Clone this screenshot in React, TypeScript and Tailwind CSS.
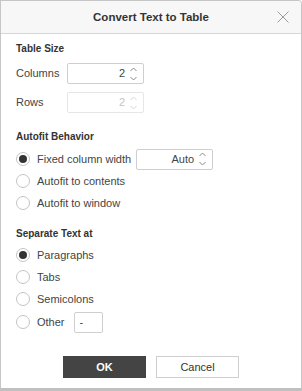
import React, { useState } from 'react'

const font = { fontFamily: '"Liberation Sans", Arial, sans-serif' }

const Arrows = ({ disabled = false }: { disabled?: boolean }) => (
  <svg width="9" height="16" viewBox="0 0 9 16" className="shrink-0">
    <path
      d="M1.5 5 L4.5 2 L7.5 5 M1.5 11 L4.5 14 L7.5 11"
      fill="none"
      stroke={disabled ? '#d6d6d6' : '#8a8a8a'}
      strokeWidth="1"
    />
  </svg>
)

const Spinner = ({ value, disabled = false }: { value: string; disabled?: boolean }) => (
  <div
    className={`flex items-center h-[21px] w-[77px] border rounded-[2px] pl-2 pr-[5px] gap-[4px] ${
      disabled ? 'border-[#e6e6e6] text-[#c4c4c4]' : 'border-[#cfcfcf] text-[#444]'
    }`}
  >
    <span className="flex-1 text-right text-[11px]">{value}</span>
    <Arrows disabled={disabled} />
  </div>
)

const Radio = ({ checked, label, onClick }: { checked: boolean; label: string; onClick: () => void }) => (
  <button onClick={onClick} className="flex items-center gap-[7px] text-[11px] text-[#444] h-[22px]">
    <span className="w-[14px] h-[14px] rounded-full border border-[#c4c4c4] flex items-center justify-center bg-white">
      {checked && <span className="w-[8px] h-[8px] rounded-full bg-[#333]" />}
    </span>
    {label}
  </button>
)

export default function App() {
  const [fit, setFit] = useState(0)
  const [sep, setSep] = useState(0)

  return (
    <div style={font} className="w-[302px] h-[391px] bg-white border border-[#c6c6c6] border-b-[3px] border-b-[#c0c0c0] rounded-tr-[4px] flex flex-col overflow-hidden">
      <div className="h-[33px] shrink-0 bg-[#f7f7f7] border-b border-[#d6d6d6] flex items-center relative">
        <div className="flex-1 text-center text-[11.5px] font-bold text-[#333] pt-px">Convert Text to Table</div>
        <svg width="12" height="12" viewBox="0 0 12 12" className="absolute right-[12px] top-[10px]">
          <path d="M0.5 0.5 L11.5 11.5 M11.5 0.5 L0.5 11.5" stroke="#9a9a9a" strokeWidth="1" />
        </svg>
      </div>

      <div className="px-[15px] pt-[7px] flex flex-col">
        <div className="text-[10px] font-bold text-[#333] h-[14px]">Table Size</div>
        <div className="flex items-center mt-[8px]">
          <span className="w-[51px] text-[11px] text-[#444]">Columns</span>
          <Spinner value="2" />
        </div>
        <div className="flex items-center mt-[8px]">
          <span className="w-[51px] text-[11px] text-[#444]">Rows</span>
          <Spinner value="2" disabled />
        </div>

        <div className="text-[10px] font-bold text-[#333] h-[14px] mt-[16px]">Autofit Behavior</div>
        <div className="flex items-center mt-[5px] gap-[5px]">
          <Radio checked={fit === 0} label="Fixed column width" onClick={() => setFit(0)} />
          <Spinner value="Auto" />
        </div>
        <Radio checked={fit === 1} label="Autofit to contents" onClick={() => setFit(1)} />
        <Radio checked={fit === 2} label="Autofit to window" onClick={() => setFit(2)} />

        <div className="text-[10px] font-bold text-[#333] h-[14px] mt-[12px]">Separate Text at</div>
        <div className="flex flex-col mt-[4px]">
          <Radio checked={sep === 0} label="Paragraphs" onClick={() => setSep(0)} />
          <Radio checked={sep === 1} label="Tabs" onClick={() => setSep(1)} />
          <Radio checked={sep === 2} label="Semicolons" onClick={() => setSep(2)} />
          <div className="flex items-center gap-[9px] mt-[1px]">
            <Radio checked={sep === 3} label="Other" onClick={() => setSep(3)} />
            <div className="w-[29px] h-[21px] border border-[#cfcfcf] rounded-[2px] text-[11px] text-[#444] pl-[5px] leading-[19px]">-</div>
          </div>
        </div>

        <div className="flex justify-center gap-[10px] mt-[23px]">
          <button className="w-[83px] h-[22px] bg-[#444] border border-[#444] text-white text-[11px] font-bold">OK</button>
          <button className="w-[83px] h-[22px] bg-white border border-[#cfcfcf] text-[#333] text-[11px]">Cancel</button>
        </div>
      </div>
    </div>
  )
}
